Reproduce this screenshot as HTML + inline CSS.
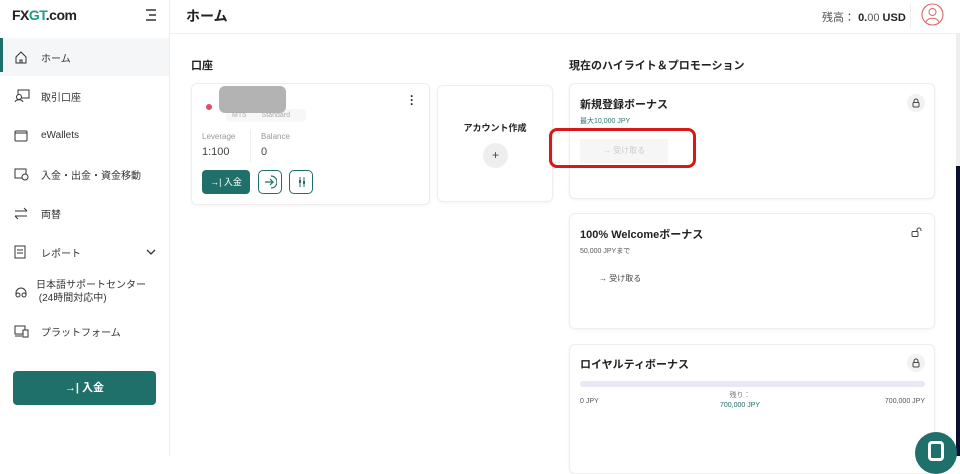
<!DOCTYPE html>
<html><head><meta charset="utf-8"><style>
*{box-sizing:border-box;margin:0;padding:0}
body{width:960px;height:456px;overflow:hidden;background:#fff;font-family:"Liberation Sans","Noto Sans CJK JP",sans-serif;color:#222;position:relative}
.abs{position:absolute}
.side{left:0;top:0;width:170px;height:456px;border-right:1px solid #eee;background:#fff}
.nav{position:absolute;left:0;width:169px;height:38px;display:flex;align-items:center;font-size:10px;color:#333}
.nav svg{position:absolute;left:14px}
.nav span{position:absolute;left:41px}
.card{position:absolute;background:#fff;border:1px solid #eee;border-radius:6px;box-shadow:0 1px 3px rgba(0,0,0,.05)}
.t{font-weight:bold;font-size:11px;color:#222}
.lock{position:absolute;width:18px;height:18px;border-radius:50%;background:#f2f2f2}
.green{color:#1f6f6a}
</style></head><body>
<div class="abs side">
  <div class="abs" style="left:12px;top:7px;font-size:14px;font-weight:bold;letter-spacing:-0.5px">FX<span style="color:#1a9a8a">GT</span>.com</div>
  <svg class="abs" style="left:144px;top:9px" width="14" height="12"><path d="M2 1h10M5 6h7M2 11h10" stroke="#333" stroke-width="1.4"/></svg>
  <div class="nav" style="top:38px;background:#f5f6f7"><div class="abs" style="left:0;top:0;width:3px;height:34px;background:#1f6f6a"></div>
    <svg width="14" height="14"><path d="M2 7L7 2l5 5v6H2z M6 13v-3h2v3" fill="none" stroke="#333"/></svg><span>ホーム</span></div>
  <div class="nav" style="top:77px"><svg width="16" height="14"><rect x="4" y="1" width="11" height="8" fill="none" stroke="#333"/><circle cx="5" cy="8" r="2.5" fill="#fff" stroke="#333"/><path d="M1 13c1-3 7-3 8 0" fill="none" stroke="#333"/></svg><span>取引口座</span></div>
  <div class="nav" style="top:116px"><svg width="14" height="13"><rect x="1" y="2" width="12" height="10" rx="1" fill="none" stroke="#333"/><path d="M1 4h12" stroke="#333"/></svg><span>eWallets</span></div>
  <div class="nav" style="top:155px"><svg width="16" height="15"><rect x="1" y="2" width="11" height="9" fill="none" stroke="#333"/><circle cx="11" cy="10" r="3" fill="#fff" stroke="#333"/></svg><span>入金・出金・資金移動</span></div>
  <div class="nav" style="top:194px"><svg width="14" height="13"><path d="M1 4h12M10 1l3 3M13 9H1M4 12l-3-3" fill="none" stroke="#333"/></svg><span>両替</span></div>
  <div class="nav" style="top:233px"><svg width="12" height="14"><rect x="1" y="1" width="10" height="12" fill="none" stroke="#333"/><path d="M3 5h6M3 8h6" stroke="#333"/></svg><span>レポート</span>
    <svg style="left:146px" width="10" height="6"><path d="M1 1l4 4 4-4" fill="none" stroke="#333" stroke-width="1.3"/></svg></div>
  <div class="nav" style="top:272px;height:40px"><svg width="14" height="13"><path d="M2 9V7a5 5 0 0110 0v2" fill="none" stroke="#333"/><circle cx="4" cy="9" r="2" fill="none" stroke="#333"/><circle cx="10" cy="9" r="2" fill="none" stroke="#333"/></svg><span style="left:36px;line-height:13px">日本語サポートセンター<br>&nbsp;(24時間対応中)</span></div>
  <div class="nav" style="top:312px"><svg width="16" height="13"><rect x="1" y="1" width="10" height="8" fill="none" stroke="#333"/><rect x="9" y="5" width="5" height="7" fill="#fff" stroke="#333"/><path d="M1 11h7" stroke="#333"/></svg><span>プラットフォーム</span></div>
  <div class="abs" style="left:13px;top:371px;width:143px;height:34px;background:#1f6f6a;border-radius:4px;color:#fff;font-size:11px;font-weight:bold;text-align:center;line-height:34px">→| 入金</div>
</div>
<div class="abs" style="left:170px;top:0;width:790px;height:34px;border-bottom:1px solid #f0f0f0"></div>
<div class="abs" style="left:186px;top:6px;font-size:14px;font-weight:bold">ホーム</div>
<div class="abs" style="left:822px;top:9px;font-size:11px;color:#555">残高： <b style="color:#222">0.</b>00 <b style="color:#222">USD</b></div>
<div class="abs" style="left:910px;top:4px;width:1px;height:24px;background:#eee"></div>
<svg class="abs" style="left:921px;top:3px" width="23" height="23"><circle cx="11.5" cy="11.5" r="10.5" fill="none" stroke="#d66" stroke-width="1.1"/><circle cx="11.5" cy="9" r="3.5" fill="none" stroke="#d66"/><path d="M5 19c2-5 11-5 13 0" fill="none" stroke="#d66"/></svg>
<div class="abs" style="left:956px;top:34px;width:4px;height:132px;background:#eee"></div>
<div class="abs" style="left:956px;top:166px;width:4px;height:290px;background:#0b1030"></div>

<div class="abs" style="left:191px;top:57px;font-size:11px;font-weight:bold">口座</div>
<div class="card" style="left:191px;top:83px;width:239px;height:122px">
  <div class="abs" style="left:14px;top:20px;width:6px;height:6px;border-radius:50%;background:#e05060"></div>
  <div class="abs" style="left:34px;top:25px;width:80px;height:13px;border-radius:4px;background:#f7f7f7"></div>
  <div class="abs" style="left:27px;top:2px;width:67px;height:27px;border-radius:6px;background:#b3b3b3"></div>
  <div class="abs" style="left:40px;top:28px;font-size:7px;color:#aaa">MT5 &nbsp;&nbsp;&nbsp;&nbsp;&nbsp;&nbsp; Standard</div>
  <div class="abs" style="left:218px;top:10px;font-size:12px;font-weight:bold;line-height:4px">·<br>·<br>·</div>
  <div class="abs" style="left:10px;top:48px;font-size:8px;color:#999">Leverage</div>
  <div class="abs" style="left:10px;top:62px;font-size:11px;color:#444">1:100</div>
  <div class="abs" style="left:58px;top:46px;width:1px;height:32px;background:#eee"></div>
  <div class="abs" style="left:69px;top:48px;font-size:8px;color:#999">Balance</div>
  <div class="abs" style="left:69px;top:62px;font-size:11px;color:#444">0</div>
  <div class="abs" style="left:10px;top:86px;width:48px;height:24px;background:#1f6f6a;border-radius:4px;color:#fff;font-size:9px;text-align:center;line-height:24px">→| 入金</div>
  <div class="abs" style="left:66px;top:86px;width:24px;height:24px;border:1px solid #1f6f6a;border-radius:5px"><svg class="abs" style="left:4px;top:4px" width="14" height="14"><path d="M8 1a6 6 0 010 12M2 7h8M7 4l3 3-3 3" fill="none" stroke="#1f6f6a" stroke-width="1.2"/></svg></div>
  <div class="abs" style="left:97px;top:86px;width:24px;height:24px;border:1px solid #1f6f6a;border-radius:5px"><svg class="abs" style="left:6px;top:5px" width="12" height="12"><path d="M4 1v10M8 1v10" stroke="#1f6f6a"/><rect x="3" y="4" width="2" height="3" fill="#1f6f6a"/><rect x="7" y="5" width="2" height="3" fill="#1f6f6a"/></svg></div>
</div>
<div class="card" style="left:437px;top:85px;width:116px;height:117px">
  <div class="abs t" style="left:0;width:100%;text-align:center;top:35px;font-size:9px">アカウント作成</div>
  <div class="abs" style="left:45px;top:57px;width:25px;height:25px;border-radius:50%;background:#eee;text-align:center;line-height:25px;font-size:12px;color:#444">+</div>
</div>

<div class="abs t" style="left:569px;top:57px">現在のハイライト＆プロモーション</div>
<div class="card" style="left:569px;top:83px;width:366px;height:116px">
  <div class="abs t" style="left:10px;top:12px">新規登録ボーナス</div>
  <div class="lock" style="left:337px;top:10px"><svg class="abs" style="left:5px;top:4px" width="8" height="10"><path d="M2 4V3a2 2 0 014 0v1" fill="none" stroke="#444"/><rect x="1" y="4.5" width="6" height="4.5" rx="1" fill="none" stroke="#444"/></svg></div>
  <div class="abs" style="left:10px;top:32px;font-size:7px;color:#2a7a72">最大10,000 JPY</div>
  <div class="abs" style="left:10px;top:55px;width:88px;height:24px;background:#f6f6f6;font-size:8px;color:#ccc;text-align:center;line-height:24px">→ 受け取る</div>
</div>
<div class="abs" style="left:549px;top:128px;width:147px;height:40px;border:3px solid #d81818;border-radius:8px"></div>
<div class="card" style="left:569px;top:213px;width:366px;height:116px">
  <div class="abs t" style="left:10px;top:12px">100% Welcomeボーナス</div>
  <svg class="abs" style="left:341px;top:13px" width="11" height="11"><path d="M6 4V3a2 2 0 014 0v1" fill="none" stroke="#444"/><rect x="1" y="4.5" width="6" height="5" rx="1" fill="none" stroke="#444"/></svg>
  <div class="abs" style="left:10px;top:32px;font-size:7px;color:#555">50,000 JPYまで</div>
  <div class="abs" style="left:29px;top:59px;font-size:8px;color:#444">→ 受け取る</div>
</div>
<div class="card" style="left:569px;top:344px;width:366px;height:130px">
  <div class="abs t" style="left:10px;top:11px">ロイヤルティボーナス</div>
  <div class="lock" style="left:337px;top:9px"><svg class="abs" style="left:5px;top:4px" width="8" height="10"><path d="M2 4V3a2 2 0 014 0v1" fill="none" stroke="#444"/><rect x="1" y="4.5" width="6" height="4.5" rx="1" fill="none" stroke="#444"/></svg></div>
  <div class="abs" style="left:10px;top:36px;width:345px;height:6px;border-radius:3px;background:#e8e8f4"></div>
  <div class="abs" style="left:10px;top:53px;font-size:7px;color:#555">0 JPY</div>
  <div class="abs" style="left:130px;top:46px;width:80px;text-align:center;font-size:7px;color:#777;line-height:10px">残り：<br><span class="green">700,000 JPY</span></div>
  <div class="abs" style="left:290px;top:53px;width:65px;text-align:right;font-size:7px;color:#555">700,000 JPY</div>
</div>
<div class="abs" style="left:915px;top:432px;width:42px;height:42px;border-radius:50%;background:#1f6f6a"></div>
<div class="abs" style="left:928px;top:441px;width:16px;height:20px;border:3px solid #fff;border-radius:4px"></div>
</body></html>
